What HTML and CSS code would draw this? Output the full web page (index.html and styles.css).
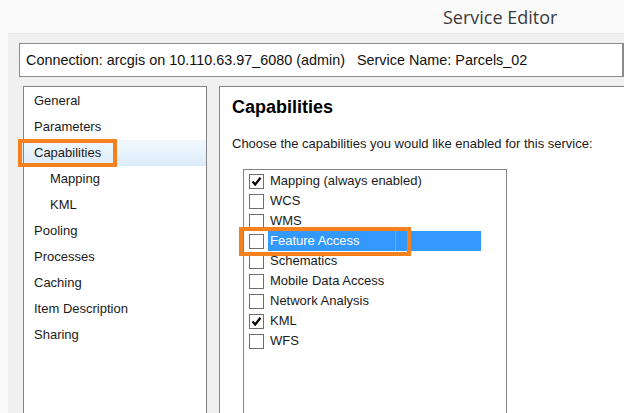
FILE: index.html
```html
<!DOCTYPE html>
<html>
<head>
<meta charset="utf-8">
<link rel="stylesheet" href="styles.css">
</head>
<body>
<div class="header"><span class="title">Service Editor</span></div>
<div class="panel">
  <div class="conn">Connection: arcgis on 10.110.63.97_6080 (admin)&nbsp;&nbsp;&nbsp;Service Name: Parcels_02</div>
  <div class="main">
    <div class="nav">
      <div class="nav-item">General</div>
      <div class="nav-item">Parameters</div>
      <div class="nav-item selected">Capabilities</div>
      <div class="nav-item sub">Mapping</div>
      <div class="nav-item sub">KML</div>
      <div class="nav-item">Pooling</div>
      <div class="nav-item">Processes</div>
      <div class="nav-item">Caching</div>
      <div class="nav-item">Item Description</div>
      <div class="nav-item">Sharing</div>
      <div class="hl-nav"></div>
    </div>
    <div class="content">
      <h1 class="heading">Capabilities</h1>
      <p class="desc">Choose the capabilities you would like enabled for this service:</p>
      <div class="list">
        <div class="row"><span class="cb"><svg width="13" height="13" viewBox="0 0 13 13"><path d="M2.5 6.5 L5.2 9.5 L10.5 2.8" fill="none" stroke="#000" stroke-width="2.2"/></svg></span><span class="lbl">Mapping (always enabled)</span></div>
        <div class="row"><span class="cb"></span><span class="lbl">WCS</span></div>
        <div class="row"><span class="cb"></span><span class="lbl">WMS</span></div>
        <div class="row active"><span class="cb"></span><span class="lbl">Feature Access<span class="divider"></span></span></div>
        <div class="row"><span class="cb"></span><span class="lbl">Schematics</span></div>
        <div class="row"><span class="cb"></span><span class="lbl">Mobile Data Access</span></div>
        <div class="row"><span class="cb"></span><span class="lbl">Network Analysis</span></div>
        <div class="row"><span class="cb"><svg width="13" height="13" viewBox="0 0 13 13"><path d="M2.5 6.5 L5.2 9.5 L10.5 2.8" fill="none" stroke="#000" stroke-width="2.2"/></svg></span><span class="lbl">KML</span></div>
        <div class="row"><span class="cb"></span><span class="lbl">WFS</span></div>
        <div class="hl-list"></div>
      </div>
    </div>
  </div>
</div>
</body>
</html>
```
FILE: styles.css
```css
html, body {
  margin: 0;
  padding: 0;
}
body {
  width: 624px;
  height: 413px;
  overflow: hidden;
  background: #fafafa;
  font-family: "Liberation Sans", Arial, sans-serif;
  color: #1a1a1a;
  display: flex;
  flex-direction: column;
}
.header {
  height: 33px;
  flex: none;
  padding-left: 443px;
  box-sizing: border-box;
}
.title {
  display: block;
  font-family: "Open Sans", sans-serif;
  font-size: 18px;
  line-height: 20px;
  padding-top: 7px;
  color: #3a3a3a;
}
.panel {
  flex: 1;
  margin-left: 8px;
  background: #f0f0f0;
  border-top: 1px solid #e6e6e6;
  padding: 9px 0 0 11px;
  display: flex;
  flex-direction: column;
  min-height: 0;
  overflow: hidden;
}
.conn {
  height: 32px;
  background: #fff;
  border: 1px solid #8a8a8f;
  border-right-width: 2px;
  font-size: 14.4px;
  line-height: 32px;
  padding-left: 6px;
  flex: none;
  color: #111;
}
.main {
  flex: 1;
  display: flex;
  gap: 12px;
  margin-top: 9px;
  margin-left: 4px;
  min-height: 0;
}
.nav {
  position: relative;
  width: 182px;
  flex: none;
  background: #fff;
  border: 1px solid #838388;
  border-bottom: none;
  padding-top: 1px;
  font-size: 13px;
}
.nav-item {
  height: 26px;
  line-height: 26px;
  padding-left: 10px;
}
.nav-item.sub {
  padding-left: 26px;
}
.nav-item.selected {
  background: linear-gradient(#f1f8fe, #dcecfa);
}
.hl-nav {
  position: absolute;
  left: -6px;
  top: 52px;
  width: 91px;
  height: 20px;
  border: 4px solid #f5801e;
}
.content {
  flex: 1;
  background: #fff;
  border: 1px solid #838388;
  border-right: none;
  border-bottom: none;
  padding: 10px 0 0 12px;
  display: flex;
  flex-direction: column;
  min-height: 0;
}
.heading {
  margin: 0;
  font-size: 18px;
  line-height: 20px;
  font-weight: bold;
  color: #000;
}
.desc {
  margin: 19px 0 0 0;
  font-size: 13px;
  line-height: 16px;
}
.list {
  position: relative;
  flex: 1;
  margin: 17px 0 0 11px;
  width: 262px;
  border: 1px solid #838388;
  border-bottom: none;
  padding-top: 1px;
  font-size: 13px;
}
.row {
  height: 20px;
  display: flex;
  align-items: center;
  padding-left: 5px;
}
.cb {
  width: 13px;
  height: 13px;
  border: 1px solid #6e6e6e;
  background: #fff;
  flex: none;
  display: flex;
}
.lbl {
  margin-left: 4px;
  padding-left: 2px;
  line-height: 20px;
  height: 20px;
}
.row.active .lbl {
  position: relative;
  background: #3399ff;
  color: #fff;
  width: 211px;
}
.divider {
  position: absolute;
  left: 127px;
  top: 0;
  width: 1px;
  height: 20px;
  background: #8ea3b8;
}
.hl-list {
  position: absolute;
  left: -5px;
  top: 57px;
  width: 164px;
  height: 21px;
  border: 4px solid #f5801e;
}
```
